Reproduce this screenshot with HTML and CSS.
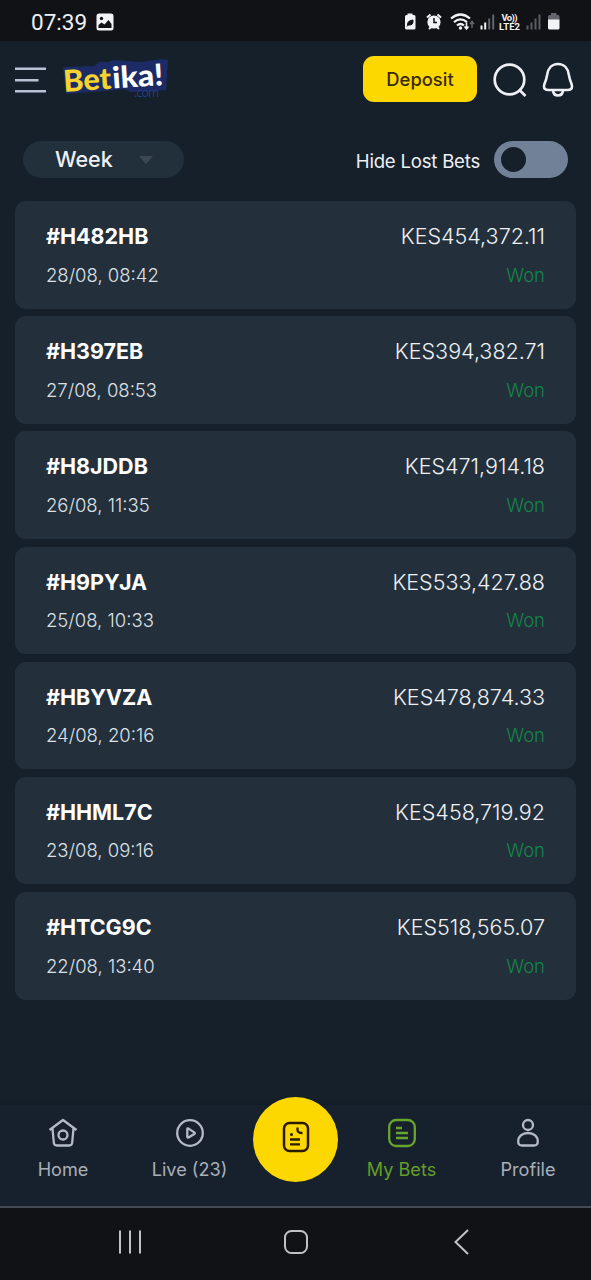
FILE: index.html
```html
<!DOCTYPE html>
<html lang="en">
<head>
<meta charset="utf-8">
<title>My Bets</title>
<link rel="stylesheet" href="styles.css">
</head>
<body>
<div class="phone">
  <div class="status">
    <span class="clock">07:39</span>
    <svg class="shot" viewBox="0 0 18 18"><rect x=".5" y=".5" width="17" height="17" rx="2.5" fill="#f2f3f5"/><circle cx="5.500" cy="5.500" r="1.700" fill="#101216"/><path d="M2.500 15v-3l3-2.500 3 2 4-4.500 3 4v4z" fill="#101216"/></svg>
    <svg class="tray" viewBox="0 0 160 24">
      <path d="M4.500 5V3.500h5V5h1.500q1.500 0 1.500 1.500V18q0 1.500-1.500 1.500H3.500Q2 19.500 2 18V6.500Q2 5 3.500 5z" fill="#f2f3f5"/>
      <path d="M4.500 15.500q-.5-5 5.500-5.500q.5 5.500-4 5M4 16.500l3.500-3.500" fill="#101216" stroke="#101216"/>
      <circle cx="31" cy="12" r="6.600" fill="#f2f3f5"/><path d="M24 7.500l3.500-3M38 7.500l-3.500-3M26 19l2-2M36 19l-2-2" stroke="#f2f3f5" stroke-width="2"/><path d="M31 8v4.500h3" fill="none" stroke="#101216" stroke-width="1.500"/>
      <path d="M48 8.500q9.500-8 19 0M51 12.200q6.500-5.500 13 0M54 15.500q3.500-3 7 0" fill="none" stroke="#f2f3f5" stroke-width="2.200"/><circle cx="57.500" cy="18" r="1.700" fill="#f2f3f5"/><path d="M63.500 12.500v6m-2-2l2 2.500 2-2.500" fill="none" stroke="#f2f3f5" stroke-width="1.500"/><path d="M69 18v-6m-2 2l2-2.500 2 2.500" fill="none" stroke="#62656b" stroke-width="1.500"/>
      <path d="M78.500 19.500v-4M82.200 19.500v-7" stroke="#f2f3f5" stroke-width="2"/><path d="M86.200 19.500v-11M90.200 19.500v-15" stroke="#62656b" stroke-width="2"/>
      <text x="98.500" y="10.500" class="volte" textLength="16">Vo))</text>
      <text x="96" y="19.500" class="volte" textLength="21">LTE2</text>
      <path d="M124.500 19.500v-4M128.500 19.500v-7M132.500 19.500v-11M136.500 19.500v-15" stroke="#5a5d63" stroke-width="2"/>
      <path d="M148 5V3h5.500v2h1.500q1.500 0 1.500 1.500V10H145V6.500Q145 5 146.500 5z" fill="#62656b"/><path d="M145 9.500h11.500V18q0 1.500-1.500 1.500h-8.500q-1.500 0-1.500-1.500z" fill="#f2f3f5"/>
    </svg>
  </div>

  <header class="header">
    <svg class="menu" viewBox="0 0 32 26"><path d="M0 1.700h31M0 13.200h23.500M0 24.300h31" stroke="#b9c2d3" stroke-width="2.600"/></svg>
    <svg class="logo" viewBox="0 0 112 44">
      <path d="M4 9l31-1 5-4 10 0 4-2 28 2 20-3 7 1-2 30-36 2-5-3-22 2-37 3z" fill="#1c2b66"/>
      <g transform="translate(5 34) rotate(-4)" class="brand"><text x="0" y="0" class="gold" textLength="48" lengthAdjust="spacingAndGlyphs">Bet</text><text x="49" y="0" class="white" textLength="51" lengthAdjust="spacingAndGlyphs">ika!</text></g>
      <text x="75" y="39" class="com" textLength="25">.com</text>
    </svg>
    <button class="deposit">Deposit</button>
    <svg class="search" viewBox="0 0 36 36"><circle cx="17.500" cy="17.500" r="14.800" fill="none" stroke="#eef0f6" stroke-width="2.700"/><path d="M27 27.500l6.500 6.500" stroke="#eef0f6" stroke-width="2.700"/></svg>
    <svg class="bell" viewBox="0 0 32 36"><path d="M16 2C9.500 2 6 7 5.200 12.500L4.200 17C3.600 19.500 2 21.500 2 24.500Q2 28 6.500 28h19q4.500 0 4.500-3.500c0-3-1.600-5-2.200-7.500l-1-4.500C26 7 22.500 2 16 2z" fill="none" stroke="#eef0f6" stroke-width="2.600"/><path d="M11 28.500q.5 5 5 5t5-5" fill="none" stroke="#eef0f6" stroke-width="2.600"/></svg>
  </header>

  <div class="filters">
    <div class="period">Week<span class="caret"></span></div>
    <span class="hide">Hide Lost Bets</span>
    <div class="toggle"><span class="knob"></span></div>
  </div>

  <main class="bets">
    <article class="bet"><div class="row"><b class="code">#H482HB</b><span class="amount">KES454,372.11</span></div><div class="row sub"><span>28/08, 08:42</span><span class="won">Won</span></div></article>
    <article class="bet"><div class="row"><b class="code">#H397EB</b><span class="amount">KES394,382.71</span></div><div class="row sub"><span>27/08, 08:53</span><span class="won">Won</span></div></article>
    <article class="bet"><div class="row"><b class="code">#H8JDDB</b><span class="amount">KES471,914.18</span></div><div class="row sub"><span>26/08, 11:35</span><span class="won">Won</span></div></article>
    <article class="bet"><div class="row"><b class="code">#H9PYJA</b><span class="amount">KES533,427.88</span></div><div class="row sub"><span>25/08, 10:33</span><span class="won">Won</span></div></article>
    <article class="bet"><div class="row"><b class="code">#HBYVZA</b><span class="amount">KES478,874.33</span></div><div class="row sub"><span>24/08, 20:16</span><span class="won">Won</span></div></article>
    <article class="bet"><div class="row"><b class="code">#HHML7C</b><span class="amount">KES458,719.92</span></div><div class="row sub"><span>23/08, 09:16</span><span class="won">Won</span></div></article>
    <article class="bet"><div class="row"><b class="code">#HTCG9C</b><span class="amount">KES518,565.07</span></div><div class="row sub"><span>22/08, 13:40</span><span class="won">Won</span></div></article>
  </main>

  <nav class="tabs">
    <a class="tab"><svg viewBox="0 0 30 30"><path d="M1.500 12L15 2l13.500 10M4.500 10.500l1.300 14q.2 3 3 3h12.400q2.800 0 3-3l1.300-14"/><circle cx="15" cy="17" r="4.500"/></svg><span>Home</span></a>
    <a class="tab"><svg viewBox="0 0 30 30"><circle cx="15" cy="15" r="12.800"/><path d="M12.300 11.200v7.600q0 1.300 1.200.7l5.800-3.600q1-.8 0-1.500l-5.800-3.800q-1.200-.7-1.200.6z"/></svg><span>Live (23)</span></a>
    <a class="slip"><svg viewBox="0 0 30 34"><rect x="3" y="3" width="24" height="28" rx="5.500" fill="none" stroke="#2b1b06" stroke-width="2.500"/><path d="M16.500 7.500v2.500q0 3 5 3M9 19.500h10M9 24.300h10" fill="none" stroke="#2b1b06" stroke-width="2.300"/><circle cx="10.500" cy="14.500" r="1.500" fill="#2b1b06"/></svg></a>
    <a class="tab on"><svg viewBox="0 0 30 30"><rect x="2.200" y="2" width="25.600" height="26" rx="7"/><path d="M9 10h6M9 15h12M9 20h12"/></svg><span>My Bets</span></a>
    <a class="tab"><svg viewBox="0 0 30 30"><circle cx="15" cy="7" r="5"/><path d="M15 15c-6 0-9.800 3.500-9.800 8.500q0 4 4 4h11.600q4 0 4-4c0-5-3.800-8.500-9.800-8.500z"/></svg><span>Profile</span></a>
  </nav>

  <div class="system">
    <svg viewBox="0 0 28 28"><path d="M4 2.500v23M14 2.500v23M24 2.500v23"/></svg>
    <svg viewBox="0 0 28 28"><rect x="3" y="3" width="22" height="22" rx="6.500"/></svg>
    <svg viewBox="0 0 28 28"><path d="M21 2L8.500 14 21 26"/></svg>
  </div>
</div>
</body>
</html>
```

FILE: styles.css
```css
* { box-sizing: border-box; }
body { margin: 0; background: #16202b; font-family: Inter, "Liberation Sans", sans-serif; }
.phone { width: 591px; height: 1280px; display: flex; flex-direction: column; background: #16202b; color: #eef0f4; overflow: hidden; }

.status { height: 41px; flex: none; background: #101216; display: flex; align-items: center; padding: 3px 28px 0 31px; }
.clock { font: 400 22.500px Roboto, sans-serif; width: 65px; white-space: nowrap; }
.shot { width: 18px; height: 18px; }
.tray { width: 160px; height: 24px; margin-left: auto; }
.volte { font: 700 9.500px Roboto, sans-serif; fill: #f2f3f5; }

.header { height: 77px; flex: none; display: flex; align-items: center; padding: 0 17px 0 15px; }
.menu { width: 32px; height: 26px; }
.logo { width: 112px; height: 44px; margin: 0 0 0 12px; overflow: visible; }
.brand { font: 900 30px Lato, sans-serif; }
.gold { fill: #f7d32d; }
.white { fill: #fff; }
.com { font: 400 12px "Open Sans", sans-serif; fill: #243e8c; }
.deposit { width: 114px; height: 46px; margin-left: auto; margin-top: -1px; border: 0; border-radius: 11px; background: #fdd800; color: #3b2a04; font: 500 18.400px Inter, sans-serif; padding: 0; }
.search { width: 36px; height: 36px; margin-left: 15px; }
.bell { width: 32px; height: 36px; margin-left: 14px; }

.filters { height: 83px; flex: none; display: flex; align-items: center; padding: 0 23px; }
.period { width: 161px; height: 37px; border-radius: 19px; background: #22303b; display: flex; align-items: center; padding: 0 31px 2px 32px; justify-content: space-between; font-size: 21.500px; font-weight: 500; }
.caret { border: 7.500px solid transparent; border-top: 8px solid #3c4854; border-bottom: 0; margin-top: 3px; }
.hide { margin-left: auto; font-size: 18.600px; font-weight: 400; letter-spacing: -.22px; margin: 2px 14px 0 auto; }
.toggle { width: 74px; height: 37px; border-radius: 19px; background: #708198; display: flex; align-items: center; padding-left: 7px; }
.knob { width: 25px; height: 25px; border-radius: 50%; background: #16202b; }

.bets { flex: 1; padding: 0 15px; display: flex; flex-direction: column; gap: 7.700px; }
.bet { height: 107.500px; border-radius: 11px; background: #23303b; padding: 20.500px 31px 0; display: flex; flex-direction: column; gap: 9.500px; }
.row { display: flex; justify-content: space-between; align-items: center; height: 29px; font-size: 21.500px; }
.code { font-weight: 700; color: #fff; }
.amount { font-weight: 300; color: #eef0f4; }
.sub { font-size: 18.500px; color: #dde1e7; font-weight: 300; }
.won { color: #13844a; }

.tabs { height: 101px; flex: none; display: flex; justify-content: space-between; padding: 13px 0 0; background: #17212d; box-shadow: 0 -2px 3px #121b26; }
.tab { width: 126px; display: flex; flex-direction: column; align-items: center; gap: 7px; font-size: 18.100px; line-height: 28px; color: #a9afb9; font-weight: 400; }
.tab svg { width: 30px; height: 30px; fill: none; stroke: #b4bac6; stroke-width: 2.300; stroke-linejoin: round; }
.tab.on { color: #639e27; }
.tab.on svg { stroke: #68a52c; }
.slip { width: 85px; height: 85px; flex: none; border-radius: 50%; background: #fdd800; margin-top: -21px; display: flex; align-items: center; justify-content: center; }
.slip svg { width: 30px; height: 34px; margin-top: -6px; }

.system { height: 74px; flex: none; background: #101216; border-top: 2px solid #444a54; display: flex; justify-content: space-between; align-items: center; padding: 0 115px 4px; }
.system svg { width: 30px; height: 28px; fill: none; stroke: #c0c2c6; stroke-width: 2; }
```
